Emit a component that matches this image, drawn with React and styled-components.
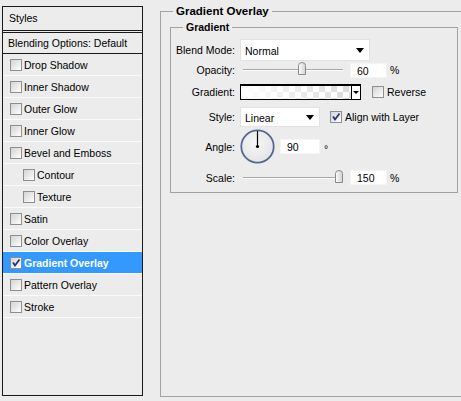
import React from 'react';
import styled, { createGlobalStyle } from 'styled-components';

const Global = createGlobalStyle`
  html, body {
    margin: 0;
    padding: 0;
    background: #ececec;
  }
  body {
    font-family: "Liberation Sans", Arial, sans-serif;
    font-size: 10.5px;
    color: #000;
  }
`;

const Window = styled.div`
  display: flex;
  align-items: stretch;
  width: 461px;
  height: 401px;
  background: #ececec;
  overflow: hidden;
`;

const StylesPanel = styled.div`
  width: 139px;
  margin: 6px 0 5px 2px;
  border: 1px solid #1a1a1a;
  background: #ececec;
  display: flex;
  flex-direction: column;
`;

const PanelHeader = styled.div`
  height: 23px;
  line-height: 23px;
  padding-left: 6px;
  border-bottom: 3px double #1a1a1a;
`;

const BlendRow = styled.div`
  height: 20px;
  line-height: 20px;
  padding-left: 5px;
  border-bottom: 1px solid #1a1a1a;
`;

const StyleItem = styled.div`
  height: 21px;
  display: flex;
  align-items: center;
  gap: 2px;
  padding-left: ${({ indent }) => (indent ? 20 : 7)}px;
  border-bottom: 1px solid #fafafa;
  background: ${({ selected }) => (selected ? '#3399ff' : 'transparent')};
  color: ${({ selected }) => (selected ? '#fff' : '#000')};
  font-weight: ${({ selected }) => (selected ? 'bold' : 'normal')};
`;

const Box = styled.span`
  position: relative;
  width: 10px;
  height: 10px;
  flex: none;
  border: 1px solid #8d8e8f;
  background: linear-gradient(135deg, #d4d4d4 0%, #f1f1f1 70%, #fff 100%);

  svg {
    position: absolute;
    left: 0;
    top: 0;
  }
`;

const Check = ({ checked }) => (
  <Box>
    {checked && (
      <svg width="10" height="10" viewBox="0 0 10 10">
        <path d="M2 4.5 L4 7.5 L8.5 1.5" fill="none" stroke="#26347a" strokeWidth="1.8" />
      </svg>
    )}
  </Box>
);

const Group = styled.fieldset`
  flex: 1;
  min-width: 0;
  margin: 4px 0 4px 17px;
  padding: 2px 3px 0 9px;
  border: 1px solid #a2a2a2;
  border-right: none;
`;

const Legend = styled.legend`
  margin-left: ${({ inset }) => inset}px;
  padding: 0 3px;
  font-weight: bold;
  font-size: ${({ big }) => (big ? '11.5px' : '10.5px')};
  line-height: 14px;
`;

const InnerGroup = styled.fieldset`
  margin: 0;
  padding: 5px 0 8px 2px;
  border: 1px solid #a2a2a2;
`;

const Row = styled.div`
  display: grid;
  grid-template-columns: 62px 1fr;
  column-gap: 5px;
  align-items: center;
  height: ${({ h }) => h}px;
  margin-top: ${({ mt }) => mt || 0}px;
`;

const Label = styled.span`
  text-align: right;
  white-space: nowrap;
`;

const Controls = styled.div`
  display: flex;
  align-items: center;
  height: 100%;
`;

const Select = styled.div`
  position: relative;
  width: ${({ w }) => w}px;
  height: ${({ h }) => h}px;
  box-sizing: border-box;
  line-height: ${({ h }) => h}px;
  padding-left: 4px;
  background: #fff;
  border: 1px solid #e2e2e2;

  &::after {
    content: '';
    position: absolute;
    right: 5px;
    top: 50%;
    margin-top: -2px;
    border-top: 5px solid #000;
    border-left: 4px solid transparent;
    border-right: 4px solid transparent;
  }
`;

const Track = styled.div`
  position: relative;
  width: 100px;
  height: 1px;
  margin: 0 7px 0 3px;
  background: #a6a6a6;
  border-bottom: 1px solid #fff;
`;

const Thumb = styled.svg`
  position: absolute;
  top: -7px;
`;

const Slider = ({ frac }) => (
  <Track>
    <Thumb width="8" height="14" viewBox="0 0 8 14" style={{ left: Math.round(frac * 92) }}>
      <defs>
        <linearGradient id="tg" x1="0" y1="0" x2="1" y2="0">
          <stop offset="0" stopColor="#fdfdfd" />
          <stop offset="1" stopColor="#d2d2d2" />
        </linearGradient>
      </defs>
      <path d="M0.5 3.5 Q0.5 0.5 4 0.5 Q7.5 0.5 7.5 3.5 L7.5 12.5 L0.5 12.5 Z" fill="url(#tg)" stroke="#8a8a8a" />
    </Thumb>
  </Track>
);

const NumInput = styled.div`
  width: ${({ w }) => w}px;
  height: 15px;
  box-sizing: border-box;
  line-height: 15px;
  padding-left: 6px;
  margin-left: ${({ ml }) => ml || 0}px;
  background: #fff;
  border: 1px solid #f4f4f4;
`;

const Unit = styled.span`
  margin-left: ${({ ml }) => ml || 3}px;
  margin-top: ${({ lift }) => (lift ? 4 : 0)}px;
`;

const Swatch = styled.div`
  display: flex;
  width: 121px;
  height: 16px;
  box-sizing: border-box;
  border: 1px solid #000;
  border-top-width: 2px;
`;

const SwatchFill = styled.div`
  flex: 1;
  background:
    linear-gradient(to right, #fff 0%, rgba(255, 255, 255, 0.15) 100%),
    conic-gradient(#d4d4d4 25%, #fff 0 50%, #d4d4d4 0 75%, #fff 0) 0 0 / 12px 12px;
`;

const SwatchButton = styled.div`
  position: relative;
  width: 8px;
  background: #fff;
  border-left: 1px solid #000;

  &::after {
    content: '';
    position: absolute;
    left: 1px;
    top: 5px;
    border-top: 3px solid #000;
    border-left: 3px solid transparent;
    border-right: 3px solid transparent;
  }
`;

const CheckLabel = styled.label`
  display: flex;
  align-items: center;
  gap: 3px;
  margin-left: ${({ gap }) => gap}px;
`;

const Dial = () => (
  <svg width="35" height="35" viewBox="0 0 35 35">
    <defs>
      <radialGradient id="dg" cx="0.45" cy="0.4" r="0.6">
        <stop offset="0" stopColor="#f7f7f7" />
        <stop offset="1" stopColor="#e4e4e4" />
      </radialGradient>
    </defs>
    <circle cx="17.5" cy="17.5" r="16.2" fill="url(#dg)" stroke="#56678d" strokeWidth="1.8" />
    <line x1="17.5" y1="17.5" x2="17.5" y2="2" stroke="#000" strokeWidth="1.2" />
    <circle cx="17.5" cy="17.5" r="1.6" fill="#000" />
  </svg>
);

const styleItems = [
  { name: 'Drop Shadow' },
  { name: 'Inner Shadow' },
  { name: 'Outer Glow' },
  { name: 'Inner Glow' },
  { name: 'Bevel and Emboss' },
  { name: 'Contour', indent: true },
  { name: 'Texture', indent: true },
  { name: 'Satin' },
  { name: 'Color Overlay' },
  { name: 'Gradient Overlay', selected: true },
  { name: 'Pattern Overlay' },
  { name: 'Stroke' },
];

export default function App() {
  return (
    <>
      <Global />
      <Window>
        <StylesPanel>
          <PanelHeader>Styles</PanelHeader>
          <BlendRow>Blending Options: Default</BlendRow>
          {styleItems.map(item => (
            <StyleItem key={item.name} indent={item.indent} selected={item.selected}>
              <Check checked={item.selected} />
              {item.name}
            </StyleItem>
          ))}
        </StylesPanel>

        <Group>
          <Legend big inset={3}>Gradient Overlay</Legend>
          <InnerGroup>
            <Legend inset={10}>Gradient</Legend>

            <Row h={22}>
              <Label>Blend Mode:</Label>
              <Controls>
                <Select w={130} h={22}>Normal</Select>
              </Controls>
            </Row>

            <Row h={16} mt={1}>
              <Label>Opacity:</Label>
              <Controls>
                <Slider frac={0.6} />
                <NumInput w={37}>60</NumInput>
                <Unit>%</Unit>
              </Controls>
            </Row>

            <Row h={16} mt={6}>
              <Label>Gradient:</Label>
              <Controls>
                <Swatch>
                  <SwatchFill />
                  <SwatchButton />
                </Swatch>
                <CheckLabel gap={11}>
                  <Check />
                  Reverse
                </CheckLabel>
              </Controls>
            </Row>

            <Row h={20} mt={7}>
              <Label>Style:</Label>
              <Controls>
                <Select w={80} h={20}>Linear</Select>
                <CheckLabel gap={10}>
                  <Check checked />
                  Align with Layer
                </CheckLabel>
              </Controls>
            </Row>

            <Row h={35} mt={2}>
              <Label>Angle:</Label>
              <Controls>
                <Dial />
                <NumInput w={40} ml={5}>90</NumInput>
                <Unit ml={4} lift>°</Unit>
              </Controls>
            </Row>

            <Row h={14} mt={6}>
              <Label>Scale:</Label>
              <Controls>
                <Slider frac={1} />
                <NumInput w={37}>150</NumInput>
                <Unit>%</Unit>
              </Controls>
            </Row>
          </InnerGroup>
        </Group>
      </Window>
    </>
  );
}
